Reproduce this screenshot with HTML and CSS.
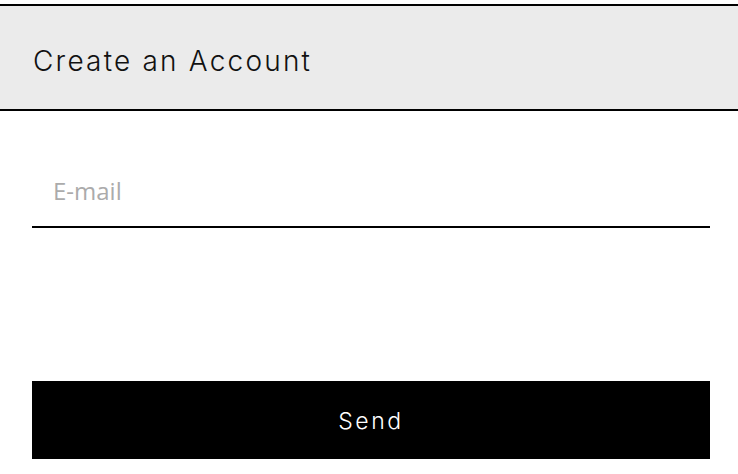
FILE: index.html
```html
<!DOCTYPE html>
<html lang="en">
<head>
<meta charset="utf-8">
<title>Create an Account</title>
<link rel="stylesheet" href="styles.css">
</head>
<body>
<header class="header">
  <h1 class="title">Create an Account</h1>
</header>
<form class="form">
  <div class="field">
    <input class="input" type="email" placeholder="E-mail">
  </div>
  <button class="send" type="button">Send</button>
</form>
</body>
</html>
```
FILE: styles.css
```css
html, body {
  margin: 0;
  padding: 0;
  background: #ffffff;
}
body {
  padding-top: 4px;
  font-family: "Inter", sans-serif;
}
.header {
  background: #ebebeb;
  border-top: 2px solid #000;
  border-bottom: 2px solid #000;
  height: 96px;
  padding-top: 7px;
  display: flex;
  align-items: center;
  padding-left: 33px;
}
.title {
  margin: 0;
  font-family: "Inter", sans-serif;
  font-weight: 300;
  font-size: 28px;
  color: #111;
  letter-spacing: 2.2px;
}
.form {
  display: flex;
  flex-direction: column;
  padding: 0 28px 0 32px;
}
.field {
  margin-top: 65px;
  border-bottom: 2px solid #000;
}
.input {
  display: block;
  width: 100%;
  box-sizing: border-box;
  border: 0;
  outline: none;
  background: transparent;
  font-family: "Open Sans", sans-serif;
  font-size: 24px;
  height: 50px;
  padding: 0 0 22px 21px;
  color: #333;
}
.input::placeholder {
  color: #ababab;
}
.send {
  margin-top: 153px;
  height: 78px;
  border: 0;
  background: #000;
  color: #fff;
  font-family: "Inter", sans-serif;
  font-weight: 300;
  font-size: 23px;
  letter-spacing: 2.6px;
  padding-top: 2px;
  cursor: pointer;
}
```
